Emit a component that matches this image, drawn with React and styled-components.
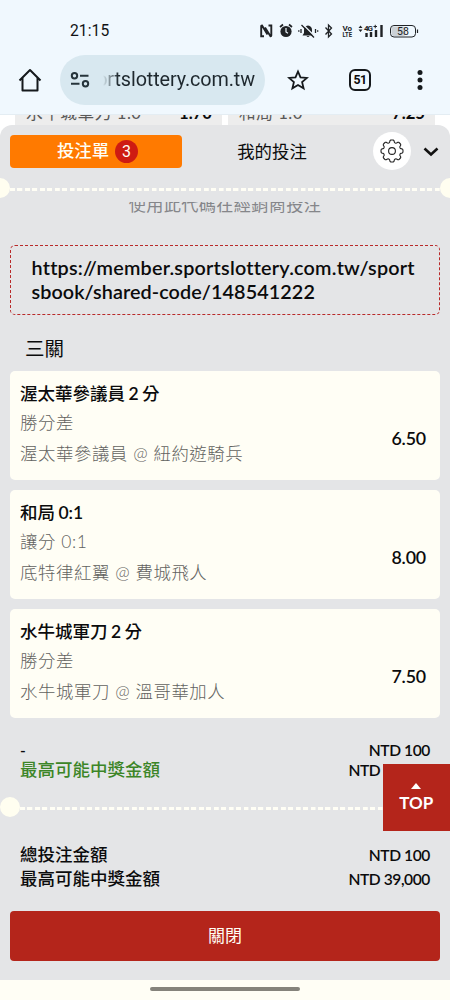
import React from "react";
import styled, { createGlobalStyle } from "styled-components";

const Global = createGlobalStyle`
  * { box-sizing: border-box; }
  body { margin: 0; background: #fffef5; }
`;

const Screen = styled.div`
  width: 450px;
  height: 1000px;
  display: flex;
  flex-direction: column;
  overflow: hidden;
  background: #fffef5;
  color: #0b0b0c;
  font-family: Lato, "Noto Sans CJK TC", sans-serif;
`;

const BrowserTop = styled.header`
  height: 115px;
  flex: none;
  background: #f0f8fe;
  border-bottom: 1px solid #e4edf3;
`;

const StatusBar = styled.div`
  height: 55px;
  padding: 6px 31px 0 70px;
  display: flex;
  align-items: center;
  justify-content: space-between;
`;

const Clock = styled.span`
  font: 400 15.6px Roboto, sans-serif;
  letter-spacing: 0.1px;
  color: #101214;
`;

const Toolbar = styled.div`
  height: 50px;
  display: flex;
  align-items: center;
  padding: 0 21px 0 17px;
`;

const Address = styled.div`
  width: 205px;
  height: 50px;
  margin-left: 17px;
  padding-left: 9px;
  border-radius: 25px;
  background: #d8e8f0;
  display: flex;
  align-items: center;
`;

const Url = styled.div`
  width: 156px;
  margin-left: 8px;
  display: flex;
  justify-content: flex-end;
  overflow: hidden;
  white-space: nowrap;
  font: 400 19.8px/30px Roboto, sans-serif;
  letter-spacing: -0.1px;
  color: #1e282e;
  mask-image: linear-gradient(90deg, transparent 4px, #000 19px);
`;

const TabCount = styled.div`
  width: 22px;
  height: 22px;
  margin-left: 40px;
  border: 2px solid #15191c;
  border-radius: 6px;
  font: 700 12.3px/18.5px Roboto, sans-serif;
  letter-spacing: -0.5px;
  text-align: center;
`;

const OddsStrip = styled.div`
  height: 25px;
  margin-bottom: -15.5px;
  flex: none;
  display: flex;
  gap: 6px;
  padding: 0 15px;
  background: #fff;
  overflow: hidden;
`;

const OddsCell = styled.div`
  width: ${(p) => p.$w}px;
  flex: none;
  height: 25px;
  padding: 0 10px 0 11px;
  display: flex;
  justify-content: space-between;
  background: #ededed;
  color: #595959;
  font-size: 16.7px;
  line-height: 24px;
  letter-spacing: 0.5px;
  span, b { margin-top: -14px; }
  b { color: #0b0b0c; letter-spacing: 0; }
`;

const Sheet = styled.main`
  position: relative;
  height: 855.5px;
  flex: none;
  border-radius: 12px 12px 0 0;
  background: #e4e5e7;
`;

const Tabs = styled.nav`
  height: 53.5px;
  display: flex;
  align-items: center;
  padding: 0 10px;
`;

const BetTab = styled.button`
  width: 172px;
  height: 33.5px;
  padding: 0 0 0 3px;
  border: 0;
  border-radius: 4px;
  background: #ff7a00;
  color: #fffef5;
  display: flex;
  align-items: center;
  justify-content: center;
  gap: 6px;
  font: 500 17.4px/24px Lato, "Noto Sans CJK TC", sans-serif;
`;

const Count = styled.span`
  width: 23px;
  height: 23px;
  border-radius: 50%;
  background: #ce1b12;
  font: 400 16px/23px Roboto, sans-serif;
  text-align: center;
`;

const MyBets = styled.span`
  width: 180px;
  padding-bottom: 2px;
  text-align: center;
  font-size: 17.4px;
`;

const RoundButton = styled.button`
  width: 38px;
  height: 38px;
  margin-left: 10.5px;
  padding: 0;
  border: 0;
  border-radius: 50%;
  background: #fff;
  display: grid;
  place-items: center;
`;

const Chevron = styled.svg`
  margin-left: 11px;
`;

const Ticket = styled.div`
  height: 20px;
  margin: 0 -10px;
  display: flex;
  align-items: center;
  overflow: hidden;
  &::before, &::after {
    content: "";
    width: 20px;
    height: 20px;
    flex: none;
    border-radius: 50%;
    background: #fffef0;
  }
`;

const SummaryDivider = styled(Ticket)`
  margin: 17px 0 0;
`;

const Dashes = styled.div`
  height: 3px;
  flex: 1;
  margin-top: 2px;
  background: repeating-linear-gradient(90deg, #fffef5 0 4.7px, transparent 5.2px 7.45px);
`;

const Hint = styled.div`
  height: 12px;
  margin-top: 4px;
  overflow: hidden;
  text-align: center;
  color: #85868a;
  font-size: 17.2px;
  letter-spacing: 0.3px;
  line-height: 24px;
  span { display: block; margin-top: -9px; }
`;

const ShareLink = styled.div`
  height: 70px;
  margin: 31px 10px 0;
  padding: 9.4px 20px 0 20.5px;
  border: 1px dashed #b82a2a;
  border-radius: 5px;
  font-weight: 600;
  font-size: 19.8px;
  line-height: 24px;
  white-space: nowrap;
`;

const LinkLine = styled.span`
  display: block;
  letter-spacing: ${(p) => p.$ls}px;
`;

const Heading = styled.h2`
  height: 56px;
  margin: 0;
  padding: 20px 25px 0;
  font-weight: 400;
  font-size: 19.5px;
  line-height: 28px;
`;

const Cards = styled.section`
  display: flex;
  flex-direction: column;
  gap: 10px;
  padding: 0 10px;
`;

const Card = styled.article`
  height: 109px;
  padding: 10px 14px 0 10px;
  border-radius: 5px;
  background: #fffef5;
  display: flex;
  justify-content: space-between;
`;

const Pick = styled.div`
  font-weight: 500;
  font-size: 17.5px;
  line-height: 26px;
  word-spacing: -1px;
  b { font-weight: 600; }
`;

const Detail = styled.div`
  height: ${(p) => p.$h}px;
  color: #626260;
  font-weight: 300;
  font-size: 17.4px;
  line-height: ${(p) => p.$h}px;
  letter-spacing: 0.58px;
`;

const Odds = styled.div`
  padding-top: 43.5px;
  font-weight: 600;
  font-size: 17.8px;
  line-height: 26px;
  letter-spacing: -0.15px;
`;

const Totals = styled.section`
  padding: ${(p) => p.$top}px 20px 0;
`;

const TotalRow = styled.div`
  height: ${(p) => p.$h}px;
  display: flex;
  justify-content: space-between;
  align-items: center;
  font-weight: 500;
  font-size: 17.5px;
  line-height: 20px;
  span { color: ${(p) => (p.$green ? "#3c8527" : "#0b0b0c")}; }
  b { padding-bottom: 1px; font-weight: 600; font-size: 15.6px; letter-spacing: -0.42px; }
`;

const CloseButton = styled.button`
  display: block;
  width: 430px;
  height: 50px;
  margin: 19.5px 10px 0;
  padding: 0;
  border: 0;
  border-radius: 4px;
  background: #b4251b;
  color: #fffef5;
  font: 400 17px/50px Lato, "Noto Sans CJK TC", sans-serif;
`;

const TopButton = styled.button`
  position: absolute;
  right: 0;
  top: 639px;
  width: 67.5px;
  height: 67px;
  padding: 19px 0 0;
  border: 0;
  background: #b4251b;
  color: #fff;
  display: flex;
  flex-direction: column;
  align-items: center;
  gap: 2px;
  font: 700 17px/24px Lato, sans-serif;
`;

const HomeBar = styled.footer`
  height: 20px;
  padding-top: 7px;
  &::before {
    content: "";
    display: block;
    width: 150px;
    height: 4px;
    margin: 0 auto;
    border-radius: 2px;
    background: #85837b;
  }
`;

const StatusText = styled.text`
  font-family: Roboto, sans-serif;
  font-weight: ${(p) => p.$w || 700};
  font-size: ${(p) => p.$s}px;
  fill: #202326;
  stroke: none;
`;

const StatusIcons = () => (
  <svg width="160" height="20" viewBox="0 0 160 20" fill="none" stroke="#202326">
    <path d="M5 15.200H2.200V5.300Q2.200 4.500 3 4.500L8.500 13.500M9.500 4.500h2.800v10q0 .800-.800.800L6 6.500" strokeWidth="1.900" />
    <circle cx="27" cy="10.500" r="5.600" fill="#202326" stroke="none" />
    <path d="M21 6l3-2.500M33 6l-3-2.500" strokeWidth="1.700" />
    <path d="M27 7v4l2 1.200" stroke="#f0f8fe" strokeWidth="1.200" />
    <path d="M43.500 14.500h11l-1.500-2.500V9q0-3.700-4-4.500-4 .800-4 4.500v3zM47.500 15h3q-1.500 2-3 0z" fill="#202326" stroke="none" />
    <path d="M44 3.500l12 12" stroke="#f0f8fe" strokeWidth="1.400" />
    <path d="M42.500 4l12.500 12.500M42 8v4M39.800 9.300v1.500M56.500 8v4M58.700 9.300v1.500" strokeWidth="1.300" />
    <path d="M66.500 6.500l6 6.500-3 3V4l3 3-6 6.500" strokeWidth="1.300" />
    <StatusText x="83.500" y="9.500" $s={8} textLength="9.500">Vo</StatusText>
    <StatusText x="83.500" y="16.200" $s={8} textLength="9.500" lengthAdjust="spacingAndGlyphs">LTE</StatusText>
    <path d="M99.500 7l2-2.500 2 2.500zM99.500 8.500l2 2.500 2-2.500z" fill="#202326" stroke="none" />
    <StatusText x="105" y="9.800" $s={8} textLength="9">4G</StatusText>
    <path d="M114.500 5.500h3.500M116.250 3.800v3.500" strokeWidth="1" />
    <path d="M107.500 16v-4M112 16v-5M117 16V9M122.500 16V4" strokeWidth="2.400" />
    <rect x="131.500" y="4.500" width="25" height="11.500" rx="3.500" strokeWidth="1" />
    <rect x="132.500" y="5.500" width="14" height="9.500" rx="2.500" fill="#cbd1d6" stroke="none" />
    <path d="M158.500 8.500v3.500" strokeWidth="1.200" />
    <StatusText x="138" y="14" $s={10.500} $w={400}>58</StatusText>
  </svg>
);

const HomeIcon = () => (
  <svg width="26" height="26" viewBox="0 0 26 26" fill="none" stroke="#15191c" strokeWidth="2">
    <path d="M2.500 13.500L13 3l10.500 10.500M5.500 11v12.500h15V11" strokeLinejoin="round" />
  </svg>
);

const TuneIcon = () => (
  <svg width="22" height="20" viewBox="0 0 22 20" fill="none" stroke="#26343b" strokeWidth="2">
    <circle cx="5.500" cy="5.700" r="2.700" />
    <path d="M11 5.700h8.500M2 13.800h8.500" />
    <circle cx="16.500" cy="13.800" r="2.700" />
  </svg>
);

const StarIcon = styled.svg`
  margin-left: 22px;
`;

const MenuIcon = styled.svg`
  margin-left: auto;
  margin-right: 6px;
`;

const gearPath = (() => {
  const pts = [];
  for (let i = 0; i < 96; i++) {
    const a = (i / 96) * Math.PI * 2;
    const r = 9.8 + 1.2 * Math.tanh(2.4 * Math.cos(8 * a) + 0.6);
    pts.push(`${(12 + r * Math.cos(a)).toFixed(2)} ${(12 + r * Math.sin(a)).toFixed(2)}`);
  }
  return `M${pts.join("L")}Z`;
})();

const bets = [
  { pick: "渥太華參議員", mark: "2", tail: " 分", market: "勝分差", match: "渥太華參議員 @ 紐約遊騎兵", odds: "6.50" },
  { pick: "和局", mark: "0:1", tail: "", market: "讓分 0:1", match: "底特律紅翼 @ 費城飛人", odds: "8.00" },
  { pick: "水牛城軍刀", mark: "2", tail: " 分", market: "勝分差", match: "水牛城軍刀 @ 溫哥華加人", odds: "7.50" },
];

export default function App() {
  return (
    <Screen>
      <Global />
      <BrowserTop>
        <StatusBar>
          <Clock>21:15</Clock>
          <StatusIcons />
        </StatusBar>
        <Toolbar>
          <HomeIcon />
          <Address>
            <TuneIcon />
            <Url>ortslottery.com.tw</Url>
          </Address>
          <StarIcon width="22" height="22" viewBox="0 0 22 22" fill="none" stroke="#15191c" strokeWidth="1.800">
            <path d="M11 2.500l2.500 5.900 6.500.5-4.900 4.200 1.500 6.200L11 16l-5.600 3.300 1.500-6.200L2 8.900l6.500-.5z" />
          </StarIcon>
          <TabCount>51</TabCount>
          <MenuIcon width="6" height="22" viewBox="0 0 6 22" fill="#15191c">
            <circle cx="3" cy="3.500" r="2.500" />
            <circle cx="3" cy="11" r="2.500" />
            <circle cx="3" cy="18.500" r="2.500" />
          </MenuIcon>
        </Toolbar>
      </BrowserTop>
      <OddsStrip>
        <OddsCell $w={207}><span>水牛城軍刀 1.0</span><b>1.70</b></OddsCell>
        <OddsCell $w={207}><span>和局 1.0</span><b>7.25</b></OddsCell>
      </OddsStrip>
      <Sheet>
        <Tabs>
          <BetTab>投注單<Count>3</Count></BetTab>
          <MyBets>我的投注</MyBets>
          <RoundButton>
            <svg width="24" height="24" viewBox="0 0 24 24" fill="none" stroke="#222" strokeWidth="1.100" strokeLinejoin="round">
              <path d={gearPath} />
              <circle cx="12" cy="12" r="3.400" />
            </svg>
          </RoundButton>
          <Chevron width="18" height="14" viewBox="0 0 18 14" fill="none" stroke="#111" strokeWidth="2.600">
            <path d="M2.500 4.500l6.500 6 6.500-6" />
          </Chevron>
        </Tabs>
        <Ticket><Dashes /></Ticket>
        <Hint><span>使用此代碼在經銷商投注</span></Hint>
        <ShareLink>
          <LinkLine $ls={0.22}>https://member.sportslottery.com.tw/sport</LinkLine>
          <LinkLine $ls={0.08}>sbook/shared-code/148541222</LinkLine>
        </ShareLink>
        <Heading>三關</Heading>
        <Cards>
          {bets.map((b) => (
            <Card key={b.match}>
              <div>
                <Pick>{b.pick} <b>{b.mark}</b>{b.tail}</Pick>
                <Detail $h={31}>{b.market}</Detail>
                <Detail $h={32}>{b.match}</Detail>
              </div>
              <Odds>{b.odds}</Odds>
            </Card>
          ))}
        </Cards>
        <Totals $top={22}>
          <TotalRow $h={20}><b>-</b><b>NTD 100</b></TotalRow>
          <TotalRow $h={20} $green><span>最高可能中獎金額</span><b>NTD 39,000</b></TotalRow>
        </Totals>
        <SummaryDivider><Dashes /></SummaryDivider>
        <Totals $top={26}>
          <TotalRow $h={24}><span>總投注金額</span><b>NTD 100</b></TotalRow>
          <TotalRow $h={24}><span>最高可能中獎金額</span><b>NTD 39,000</b></TotalRow>
        </Totals>
        <CloseButton>關閉</CloseButton>
        <TopButton>
          <svg width="10" height="6" viewBox="0 0 10 6" fill="#fff"><path d="M0 6l5-6 5 6z" /></svg>
          TOP
        </TopButton>
      </Sheet>
      <HomeBar />
    </Screen>
  );
}
